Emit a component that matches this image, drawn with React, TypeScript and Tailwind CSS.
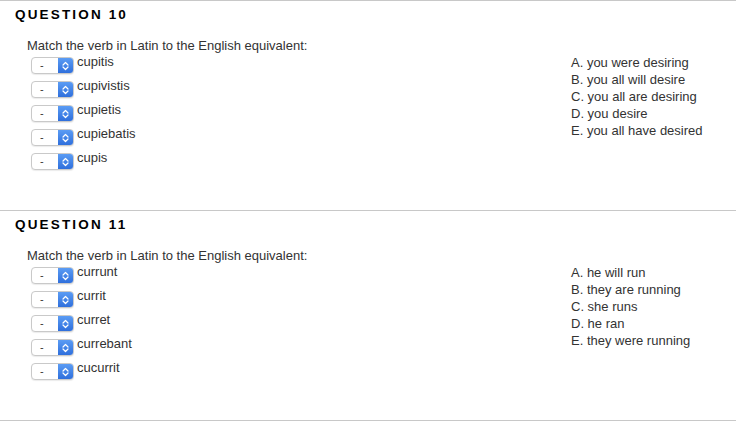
import React from 'react'

type Question = {
  number: number
  prompt: string
  items: string[]
  answers: string[]
}

const questions: Question[] = [
  {
    number: 10,
    prompt: 'Match the verb in Latin to the English equivalent:',
    items: ['cupitis', 'cupivistis', 'cupietis', 'cupiebatis', 'cupis'],
    answers: [
      'A. you were desiring',
      'B. you all will desire',
      'C. you all are desiring',
      'D. you desire',
      'E. you all have desired',
    ],
  },
  {
    number: 11,
    prompt: 'Match the verb in Latin to the English equivalent:',
    items: ['currunt', 'currit', 'curret', 'currebant', 'cucurrit'],
    answers: [
      'A. he will run',
      'B. they are running',
      'C. she runs',
      'D. he ran',
      'E. they were running',
    ],
  },
]

function MiniSelect() {
  return (
    <div className="flex h-[17px] w-[43px] rounded-[4px] border border-[#c9c9c9] bg-white shadow-[0_1px_1px_rgba(0,0,0,0.08)] overflow-hidden">
      <div className="flex-1 flex items-center pl-[8px] text-[11px] leading-none text-[#333]">-</div>
      <div className="w-[15px] flex items-center justify-center bg-gradient-to-b from-[#5b9cf4] to-[#2f6fdc]">
        <svg width="7" height="10" viewBox="0 0 7 10" fill="none">
          <path d="M1 4 L3.5 1.5 L6 4" stroke="white" strokeWidth="1.2" strokeLinecap="round" strokeLinejoin="round" />
          <path d="M1 6 L3.5 8.5 L6 6" stroke="white" strokeWidth="1.2" strokeLinecap="round" strokeLinejoin="round" />
        </svg>
      </div>
    </div>
  )
}

function QuestionBlock({ q }: { q: Question }) {
  return (
    <section className="h-[210px] border-t border-[#c8c8c8] pt-[6px]">
      <h2 className="pl-[15px] text-[13.5px] leading-[16px] font-bold tracking-[0.16em] text-black">
        QUESTION {q.number}
      </h2>
      <div className="pl-[27px] mt-[15px] flex">
        <div className="w-[544px]">
          <p className="text-[13px] leading-[16px] text-[#333]">{q.prompt}</p>
          <div className="pl-[4px] flex flex-col">
            {q.items.map((item) => (
              <div key={item} className="flex items-start h-[24px] gap-[3px]">
                <div className="mt-[3px]">
                  <MiniSelect />
                </div>
                <span className="text-[13px] leading-[16px] text-[#333]">{item}</span>
              </div>
            ))}
          </div>
        </div>
        <ul className="mt-[16px] text-[13px] leading-[17px] text-[#333]">
          {q.answers.map((a) => (
            <li key={a}>{a}</li>
          ))}
        </ul>
      </div>
    </section>
  )
}

export default function App() {
  return (
    <div
      className="w-[736px] h-[421px] bg-white overflow-hidden"
      style={{ fontFamily: '"Liberation Sans", Arial, sans-serif' }}
    >
      <div className="border-b border-[#c8c8c8]">
        {questions.map((q) => (
          <QuestionBlock key={q.number} q={q} />
        ))}
      </div>
    </div>
  )
}
